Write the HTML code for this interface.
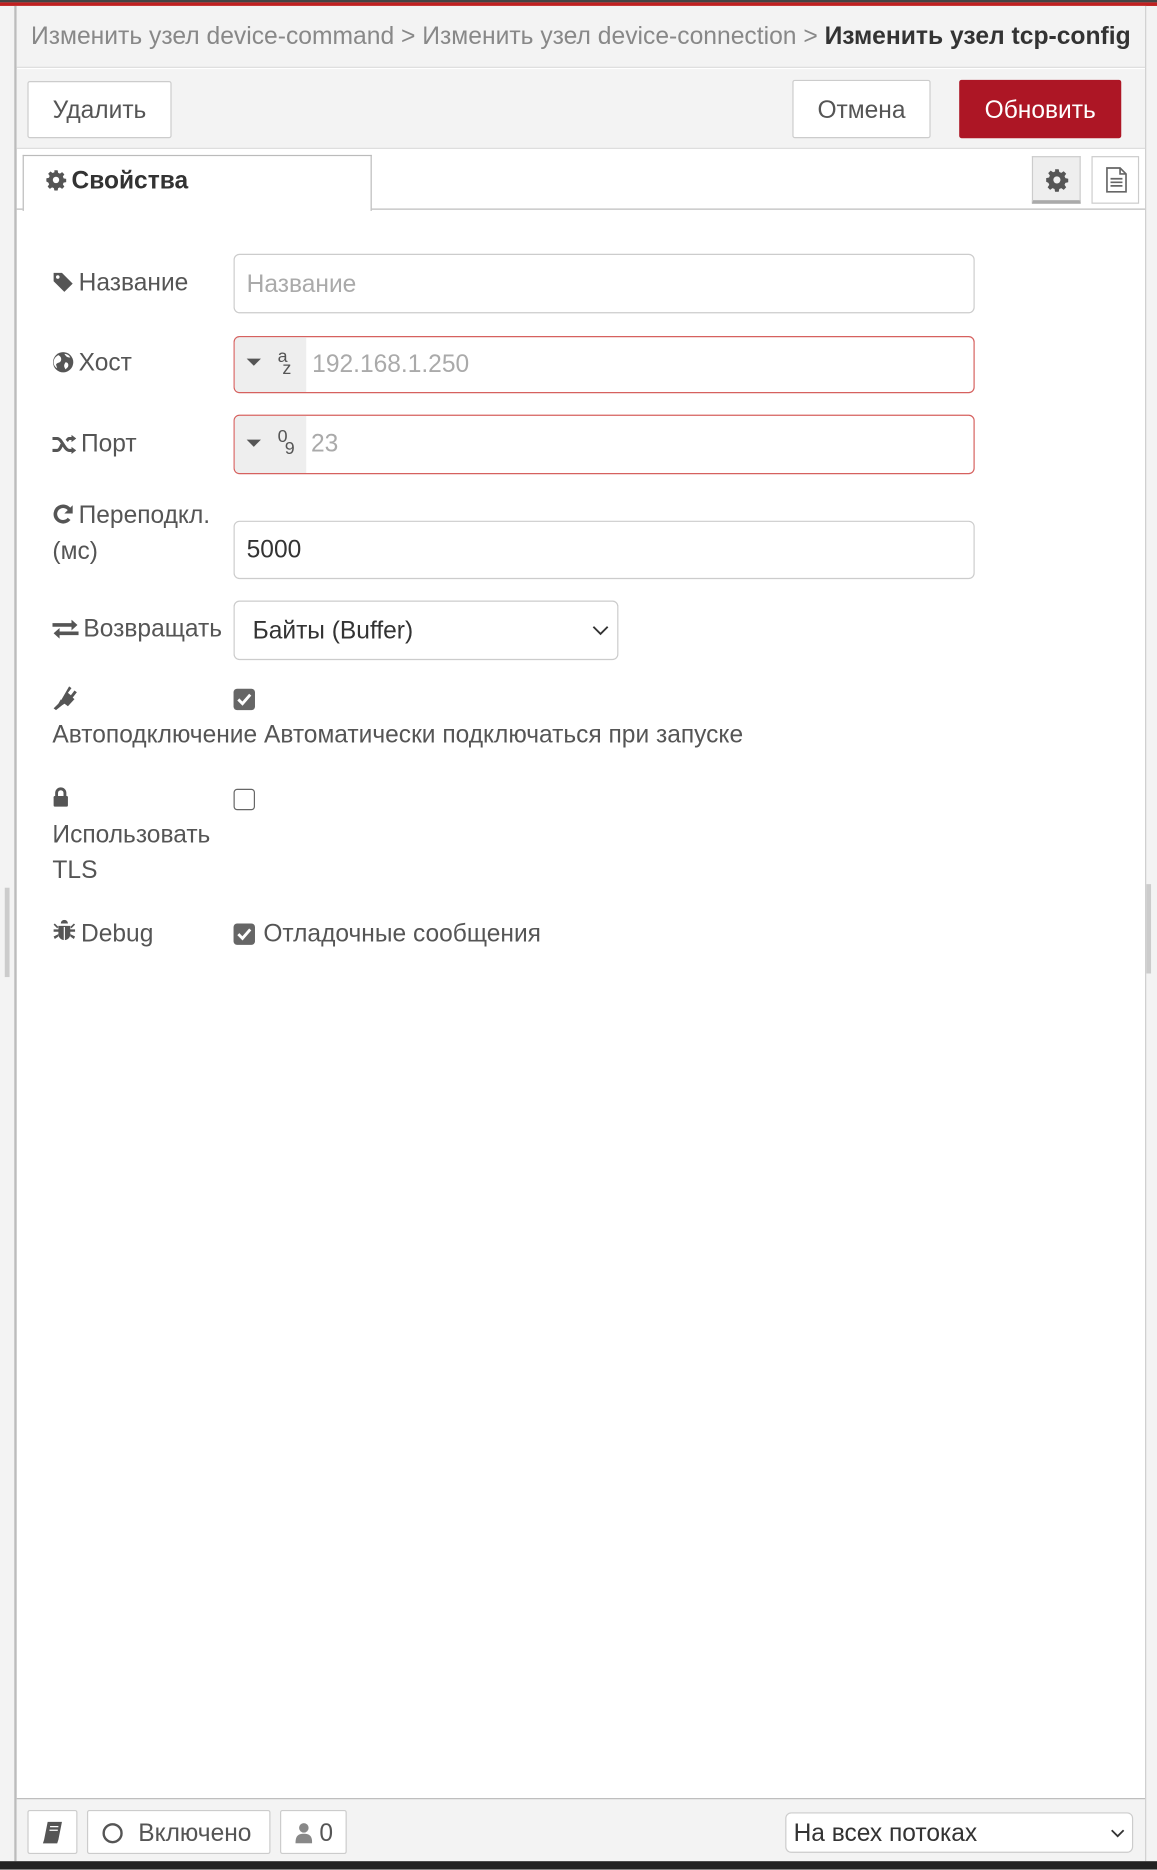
<!DOCTYPE html>
<html><head><meta charset="utf-8">
<style>
html,body{margin:0;padding:0;width:1157px;height:1869px;overflow:hidden;background:#f3f3f3;}
#w{position:absolute;left:0;top:0;width:971px;height:1569px;transform:scale(1.19155);transform-origin:0 0;font-family:"Liberation Sans",Arial,sans-serif;color:#555;}
.a{position:absolute;box-sizing:border-box;}
.btn{position:absolute;box-sizing:border-box;background:#fff;border:1px solid #ccc;border-radius:2px;color:#555;font-size:20.6px;text-align:center;}
.lbl{position:absolute;left:44px;font-size:20.6px;color:#555;}
.inp{position:absolute;left:196px;width:622px;box-sizing:border-box;border:1px solid #ccc;border-radius:5px;background:#fff;font-size:20.6px;}
.ic{display:inline-block;vertical-align:-2px;margin-right:4px;}
.cb{position:absolute;left:196px;width:18px;height:18px;box-sizing:border-box;border-radius:3px;}
</style></head><body><div id="w">
<div class="a" style="left:0;top:0;width:971px;height:2px;background:#444"></div>
<div class="a" style="left:0;top:2px;width:971px;height:3px;background:#c02020"></div>
<div class="a" style="left:0;top:5px;width:13px;height:1557px;background:#f3f3f3;border-right:1px solid #bbb"></div>
<div class="a" style="left:4px;top:745px;width:4px;height:75px;background:#ccc"></div>
<div class="a" style="left:13px;top:5px;width:949px;height:1557px;background:#fff;border-left:1px solid #bbb;border-right:1px solid #ccc"></div>
<div class="a" style="left:962px;top:742px;width:4px;height:75px;background:#ccc"></div>
<!-- header -->
<div class="a" style="left:14px;top:5px;width:947px;height:52px;background:#f3f3f3;border-bottom:1px solid #ddd"></div>
<div class="a" style="left:26px;top:19px;font-size:20.7px;white-space:nowrap;color:#888">Изменить узел device-command &gt; Изменить узел device-connection &gt; <b style="color:#333">Изменить узел tcp-config</b></div>
<div class="a" style="left:14px;top:58px;width:947px;height:67px;background:#f3f3f3;border-bottom:1px solid #ddd"></div>
<div class="btn" style="left:23px;top:68px;width:121px;height:48px;line-height:48px">Удалить</div>
<div class="btn" style="left:665px;top:67px;width:116px;height:49px;line-height:49px">Отмена</div>
<div class="btn" style="left:805px;top:67px;width:136px;height:49px;line-height:49px;background:#ad1625;border-color:#ad1625;color:#fff">Обновить</div>
<!-- tabs -->
<div class="a" style="left:14px;top:175px;width:947px;height:1px;background:#bbb"></div>
<div class="a" style="left:19px;top:130px;width:293px;height:47px;background:#fff;border:1px solid #bbb;border-bottom:none;font-size:20.6px;font-weight:bold;color:#333;padding:9px 0 0 18px">
<svg class="ic" width="18" height="18" viewBox="0 0 20 20"><path fill="#555" d="M8.5 1h3l.5 2.4 1.7.7 2-1.4 2.1 2.1-1.4 2 .7 1.7 2.4.5v3l-2.4.5-.7 1.7 1.4 2-2.1 2.1-2-1.4-1.7.7-.5 2.4h-3l-.5-2.4-1.7-.7-2 1.4-2.1-2.1 1.4-2-.7-1.7L1 11.5v-3l2.4-.5.7-1.7-1.4-2 2.1-2.1 2 1.4 1.7-.7zM10 7a3 3 0 100 6 3 3 0 000-6z"/></svg>Свойства</div>
<div class="a" style="left:866px;top:131px;width:41px;height:40px;background:#eee;border:1px solid #ccc;border-bottom:3px solid #aaa;padding:9px 0 0 10px"><svg width="20" height="20" viewBox="0 0 20 20"><path fill="#555" d="M8.5 1h3l.5 2.4 1.7.7 2-1.4 2.1 2.1-1.4 2 .7 1.7 2.4.5v3l-2.4.5-.7 1.7 1.4 2-2.1 2.1-2-1.4-1.7.7-.5 2.4h-3l-.5-2.4-1.7-.7-2 1.4-2.1-2.1 1.4-2-.7-1.7L1 11.5v-3l2.4-.5.7-1.7-1.4-2 2.1-2.1 2 1.4 1.7-.7zM10 7a3 3 0 100 6 3 3 0 000-6z"/></svg></div>
<div class="a" style="left:916px;top:131px;width:40px;height:40px;background:#fff;border:1px solid #ccc;padding:8px 0 0 11px"><svg width="18" height="22" viewBox="0 0 18 22"><path fill="none" stroke="#666" stroke-width="1.4" d="M1 1h11l5 5v15H1zM12 1v5h5M4 10h10M4 13h10M4 16h10"/></svg></div>
<!-- rows -->
<div class="lbl" style="top:226px"><svg class="ic" width="18" height="18" viewBox="0 0 18 18"><path fill="#555" d="M1 1h7l9 9-7 7-9-9zM4.5 3a1.5 1.5 0 100 3 1.5 1.5 0 000-3z"/></svg>Название</div>
<div class="inp" style="top:213px;height:50px;padding:13px 10px;color:#aaa">Название</div>
<div class="lbl" style="top:293px"><svg class="ic" width="18" height="18" viewBox="0 0 18 18"><circle cx="9" cy="9" r="8.5" fill="#555"/><path fill="#fff" d="M5 3c2 1 3 3 2 5s-3 1-4 3l1 3c-2-1-3-3-3-5 0-3 2-5 4-6zM11 9c2 0 3 2 2 4l-2 2c-1-2-2-3 0-6zM10 2c2 0 4 1 5 3-2 0-3 0-5-3z"/></svg>Хост</div>
<div class="inp" style="top:282px;height:48px;border-color:#d6615f;overflow:hidden"><div class="a" style="left:0;top:0;width:60px;height:46px;background:#eee"></div><div class="a" style="left:10px;top:18px;width:0;height:0;border-left:6px solid transparent;border-right:6px solid transparent;border-top:6px solid #555"></div><div class="a" style="left:36px;top:8px;font-size:15px;color:#555">a</div><div class="a" style="left:40px;top:18px;font-size:15px;color:#555">z</div><div class="a" style="left:65px;top:11px;color:#aaa">192.168.1.250</div></div>
<div class="lbl" style="top:361px"><svg class="ic" width="20" height="16" viewBox="0 0 20 16"><path fill="none" stroke="#555" stroke-width="2.6" d="M0 3h4c4 0 6 10 10 10h3M0 13h4c2 0 3-3 4-5M12 5c1-1 1-2 2-2h3"/><path fill="#555" d="M16 0l4 3-4 3zM16 10l4 3-4 3z"/></svg>Порт</div>
<div class="inp" style="top:348px;height:50px;border-color:#d6615f;overflow:hidden"><div class="a" style="left:0;top:0;width:60px;height:48px;background:#eee"></div><div class="a" style="left:10px;top:20px;width:0;height:0;border-left:6px solid transparent;border-right:6px solid transparent;border-top:6px solid #555"></div><div class="a" style="left:36px;top:9px;font-size:15px;color:#555">0</div><div class="a" style="left:42px;top:19px;font-size:15px;color:#555">9</div><div class="a" style="left:64px;top:12px;color:#aaa">23</div></div>
<div class="lbl" style="top:418px;line-height:30px"><svg class="ic" width="18" height="18" viewBox="0 0 18 18"><path fill="none" stroke="#555" stroke-width="3" d="M14 12.5A6.5 6.5 0 1115 6"/><path fill="#555" d="M17 1v7h-7z"/></svg>Переподкл.<br>(мс)</div>
<div class="inp" style="top:437px;height:49px;padding:12px 10px;color:#333">5000</div>
<div class="lbl" style="top:516px"><svg class="ic" width="22" height="16" viewBox="0 0 22 16"><path fill="#555" d="M0 3h16V0l5 4.5-5 4.5V6H0zM22 10H6V7l-5 4.5L6 16v-3h16z"/></svg>Возвращать</div>
<div class="inp" style="top:504px;height:50px;width:323px;padding:13px 15px;color:#333">Байты (Buffer)<svg class="a" style="left:300px;top:20px" width="14" height="9" viewBox="0 0 14 9"><path fill="none" stroke="#333" stroke-width="1.6" d="M1 1l6 6 6-6"/></svg></div>
<div class="lbl" style="top:575px"><svg width="22" height="22" viewBox="0 0 22 22"><path fill="#555" d="M14 1l2 1.5-3 4 2.5 2 3-4 2 1.5-3.5 4.5 1.5 1.2-5.5 6-6-4.5zM7 12l4 3-3 2-5 4-2-1.5 4-4z"/></svg></div>
<div class="cb" style="top:578px;background:#666"><svg width="18" height="18" viewBox="0 0 18 18"><path fill="none" stroke="#fff" stroke-width="2.4" d="M4 9l3.5 3.5L14 5"/></svg></div>
<div class="lbl" style="top:605px;white-space:nowrap">Автоподключение Автоматически подключаться при запуске</div>
<div class="lbl" style="top:660px"><svg width="14" height="18" viewBox="0 0 14 18"><path fill="none" stroke="#555" stroke-width="2.4" d="M3.5 8V5.5a3.5 3.5 0 017 0V8"/><rect x="1" y="8" width="12" height="9" rx="1" fill="#555"/></svg></div>
<div class="cb" style="top:662px;border:1.5px solid #666;background:#fff"></div>
<div class="lbl" style="top:686px;line-height:29.5px">Использовать<br>TLS</div>
<div class="lbl" style="top:772px"><svg class="ic" width="20" height="20" viewBox="0 0 20 20"><path fill="#555" d="M7 3a3 3 0 016 0zM5 5h10v7a5 5 0 01-10 0zM1 8h4v2H1zM15 8h4v2h-4zM1 14l4-2v2l-3 2zM19 14l-4-2v2l3 2zM2 3l3 3-1 1-3-3zM18 3l-3 3 1 1 3-3z"/><path stroke="#fff" stroke-width="1" d="M10 6v12"/></svg>Debug</div>
<div class="cb" style="top:775px;background:#666"><svg width="18" height="18" viewBox="0 0 18 18"><path fill="none" stroke="#fff" stroke-width="2.4" d="M4 9l3.5 3.5L14 5"/></svg></div>
<div class="a" style="left:221px;top:772px;font-size:20.6px;color:#555;white-space:nowrap">Отладочные сообщения</div>
<!-- footer -->
<div class="a" style="left:14px;top:1509px;width:947px;height:53px;background:#f3f3f3;border-top:1px solid #bbb"></div>
<div class="btn" style="left:23px;top:1519px;width:42px;height:37px;padding-top:8px"><svg width="18" height="20" viewBox="0 0 18 20"><path fill="#555" d="M5 1h12l-3 15H2zM2 16h12l-1 3H1z"/><path stroke="#fff" stroke-width="1" d="M7 5h7M6.5 8h7"/></svg></div>
<div class="btn" style="left:73px;top:1519px;width:154px;height:37px;line-height:37px;text-align:left;padding-left:12px"><span style="display:inline-block;width:13px;height:13px;border:2px solid #555;border-radius:50%;vertical-align:-2px;margin-right:13px"></span>Включено</div>
<div class="btn" style="left:235px;top:1519px;width:56px;height:37px;line-height:37px;text-align:left;padding-left:12px"><svg width="14" height="18" viewBox="0 0 14 18" style="vertical-align:-2px;margin-right:6px"><circle cx="7" cy="5" r="4" fill="#888"/><path fill="#888" d="M0 18c0-6 2-8 7-8s7 2 7 8z"/></svg>0</div>
<div class="btn" style="left:659px;top:1521px;width:292px;height:34px;line-height:34px;text-align:left;padding-left:6px;color:#333;border-radius:5px">На всех потоках<svg class="a" style="left:272px;top:13px" width="12" height="8" viewBox="0 0 12 8"><path fill="none" stroke="#333" stroke-width="1.5" d="M1 1l5 5 5-5"/></svg></div>
<div class="a" style="left:0;top:1562px;width:971px;height:7px;background:#222"></div>
</div></body></html>
